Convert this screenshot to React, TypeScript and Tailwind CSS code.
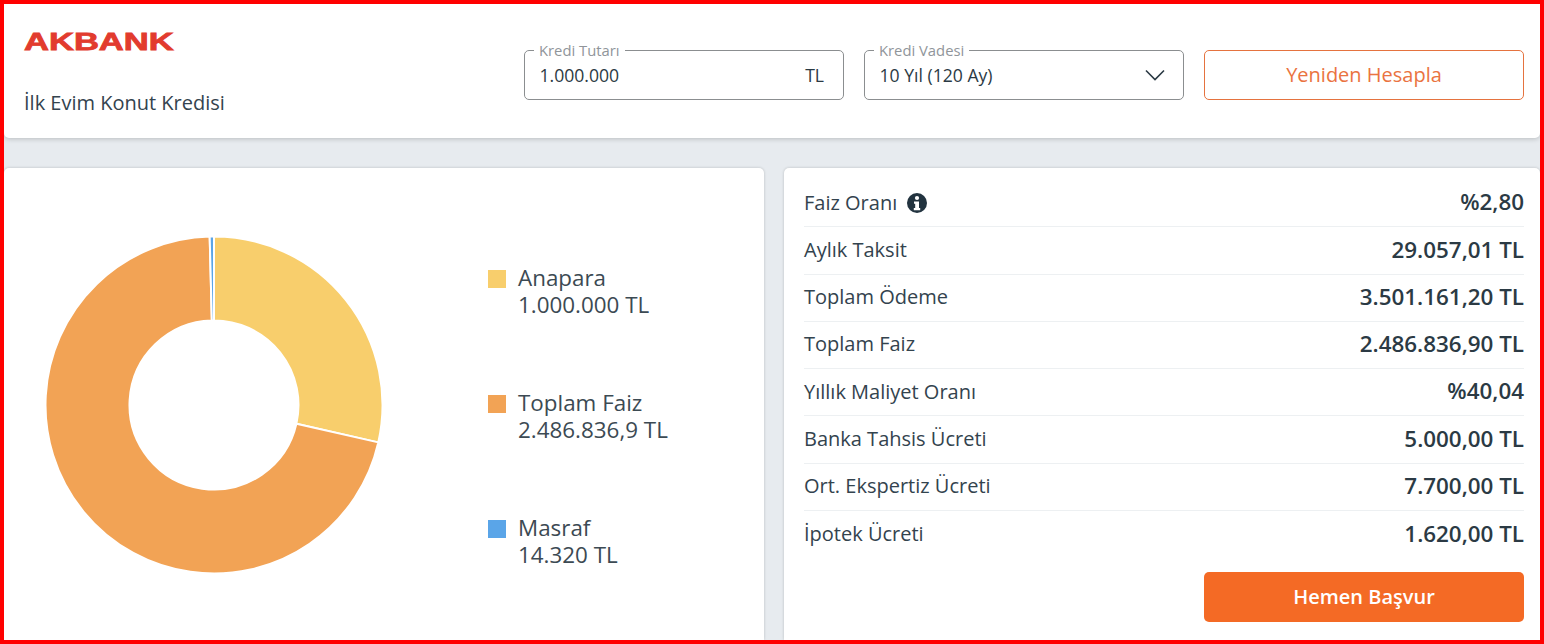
const slices = [
  { name: "Anapara", value: "1.000.000 TL", amount: 1000000, color: "#f8ce6c", swatch: "bg-[#f8ce6c]" },
  { name: "Toplam Faiz", value: "2.486.836,9 TL", amount: 2486836.9, color: "#f2a355", swatch: "bg-[#f2a355]" },
  { name: "Masraf", value: "14.320 TL", amount: 14320, color: "#5aa5e8", swatch: "bg-[#5aa5e8]" },
];

const rows = [
  { label: "Faiz Oranı", value: "%2,80", info: true },
  { label: "Aylık Taksit", value: "29.057,01 TL" },
  { label: "Toplam Ödeme", value: "3.501.161,20 TL" },
  { label: "Toplam Faiz", value: "2.486.836,90 TL" },
  { label: "Yıllık Maliyet Oranı", value: "%40,04" },
  { label: "Banka Tahsis Ücreti", value: "5.000,00 TL" },
  { label: "Ort. Ekspertiz Ücreti", value: "7.700,00 TL" },
  { label: "İpotek Ücreti", value: "1.620,00 TL" },
];

function Donut() {
  const total = slices.reduce((sum, s) => sum + s.amount, 0);
  let start = -Math.PI / 2;
  const paths = slices.map((s) => {
    const sweep = (s.amount / total) * 2 * Math.PI;
    const end = start + sweep;
    const outer = 168.5;
    const inner = 84.5;
    const large = sweep > Math.PI ? 1 : 0;
    const p = (r: number, a: number) => `${170 + r * Math.cos(a)} ${170 + r * Math.sin(a)}`;
    const d = `M${p(outer, start)}A${outer} ${outer} 0 ${large} 1 ${p(outer, end)}L${p(inner, end)}A${inner} ${inner} 0 ${large} 0 ${p(inner, start)}Z`;
    start = end;
    return <path key={s.name} d={d} fill={s.color} stroke="#fff" strokeWidth="2" />;
  });
  return (
    <svg width="340" height="340" viewBox="0 0 340 340" className="shrink-0">
      {paths}
    </svg>
  );
}

function InfoIcon() {
  return (
    <svg width="20" height="20" viewBox="0 0 20 20">
      <circle cx="10" cy="10" r="10" fill="#22333f" />
      <circle cx="10" cy="5" r="2.1" fill="#fff" />
      <path d="M7 8.4h5v6.6h1.2v2.3H6.8V15h1.4v-4.3H7z" fill="#fff" />
    </svg>
  );
}

function Field({ label, children }: { label: string; children: React.ReactNode }) {
  return (
    <fieldset className="h-[57px] w-80 rounded-[5px] border border-[#8b8e90] px-[9px]">
      <legend className="px-[5px] text-[14.8px] leading-[14px] text-[#90959a]">{label}</legend>
      <div className="flex h-[36px] items-center justify-between pl-[5.5px] pr-[10px] text-[17.6px] text-[#2b3a44]">
        {children}
      </div>
    </fieldset>
  );
}

export default function App() {
  return (
    <div className="flex h-[644px] flex-col overflow-hidden border-4 border-[#ff0000] bg-[#e7ebef] font-['Open_Sans',sans-serif] text-[#2b3a44]">
      <header className="flex h-[134px] shrink-0 justify-between rounded-b-[5px] bg-white pl-5 pr-4 shadow-[0_1px_5px_rgba(0,0,0,0.2)]">
        <div className="flex flex-col">
          <div className="mt-[24px] h-[28px] origin-left scale-x-[1.44] font-['Liberation_Sans',sans-serif] text-[24px] leading-[28px] font-bold text-[#e23b2e] [-webkit-text-stroke:0.8px_#e23b2e]">
            AKBANK
          </div>
          <div className="mt-[35px] text-[20px] leading-[24px] text-[#33434e]">İlk Evim Konut Kredisi</div>
        </div>
        <div className="mt-[39px] flex h-[57px] gap-5">
          <Field label="Kredi Tutarı">
            <span>1.000.000</span>
            <span>TL</span>
          </Field>
          <Field label="Kredi Vadesi">
            <span>10 Yıl (120 Ay)</span>
            <svg width="22" height="12" viewBox="0 0 22 12" fill="none" className="-mr-[2px]">
              <path d="M2 1.5l9 9 9-9" stroke="#2b3a44" strokeWidth="1.6" />
            </svg>
          </Field>
          <button className="mt-[7px] h-[50px] w-80 rounded-[5px] border border-[#e5733f] text-[20px] text-[#ea7341]">
            Yeniden Hesapla
          </button>
        </div>
      </header>

      <main className="mt-[30px] flex flex-1 gap-5">
        <section className="flex w-[760px] rounded-t-[5px] bg-white pl-10 pt-[67px] shadow-[0_0_3px_rgba(0,0,0,0.2)]">
          <Donut />
          <ul className="ml-[104px] flex flex-col gap-[71px] pt-[29px]">
            {slices.map((s) => (
              <li key={s.name} className="flex gap-3 text-[22.4px] leading-[27px] text-[#3c4a53]">
                <span className={`mt-[6px] size-[18px] ${s.swatch}`} />
                <div>
                  <div>{s.name}</div>
                  <div>{s.value}</div>
                </div>
              </li>
            ))}
          </ul>
        </section>

        <section className="flex-1 rounded-t-[5px] bg-white pl-5 pr-4 pt-[12px] shadow-[0_0_3px_rgba(0,0,0,0.2)]">
          {rows.map((r, i) => (
            <div
              key={r.label}
              className={`flex h-[47.25px] items-center justify-between pb-[1px] ${i < rows.length - 1 ? "border-b border-[#edf0f2]" : ""}`}
            >
              <span className="flex items-center gap-[10px] text-[20px] text-[#33434e]">
                {r.label}
                {r.info && <InfoIcon />}
              </span>
              <span className="mb-[1px] text-[22.4px] font-semibold text-[#2b3a44]">{r.value}</span>
            </div>
          ))}
          <div className="mt-[14px] flex justify-end">
            <button className="h-[50px] w-80 rounded-[5px] bg-[#f46a25] text-[20px] font-semibold text-white">
              Hemen Başvur
            </button>
          </div>
        </section>
      </main>
    </div>
  );
}
